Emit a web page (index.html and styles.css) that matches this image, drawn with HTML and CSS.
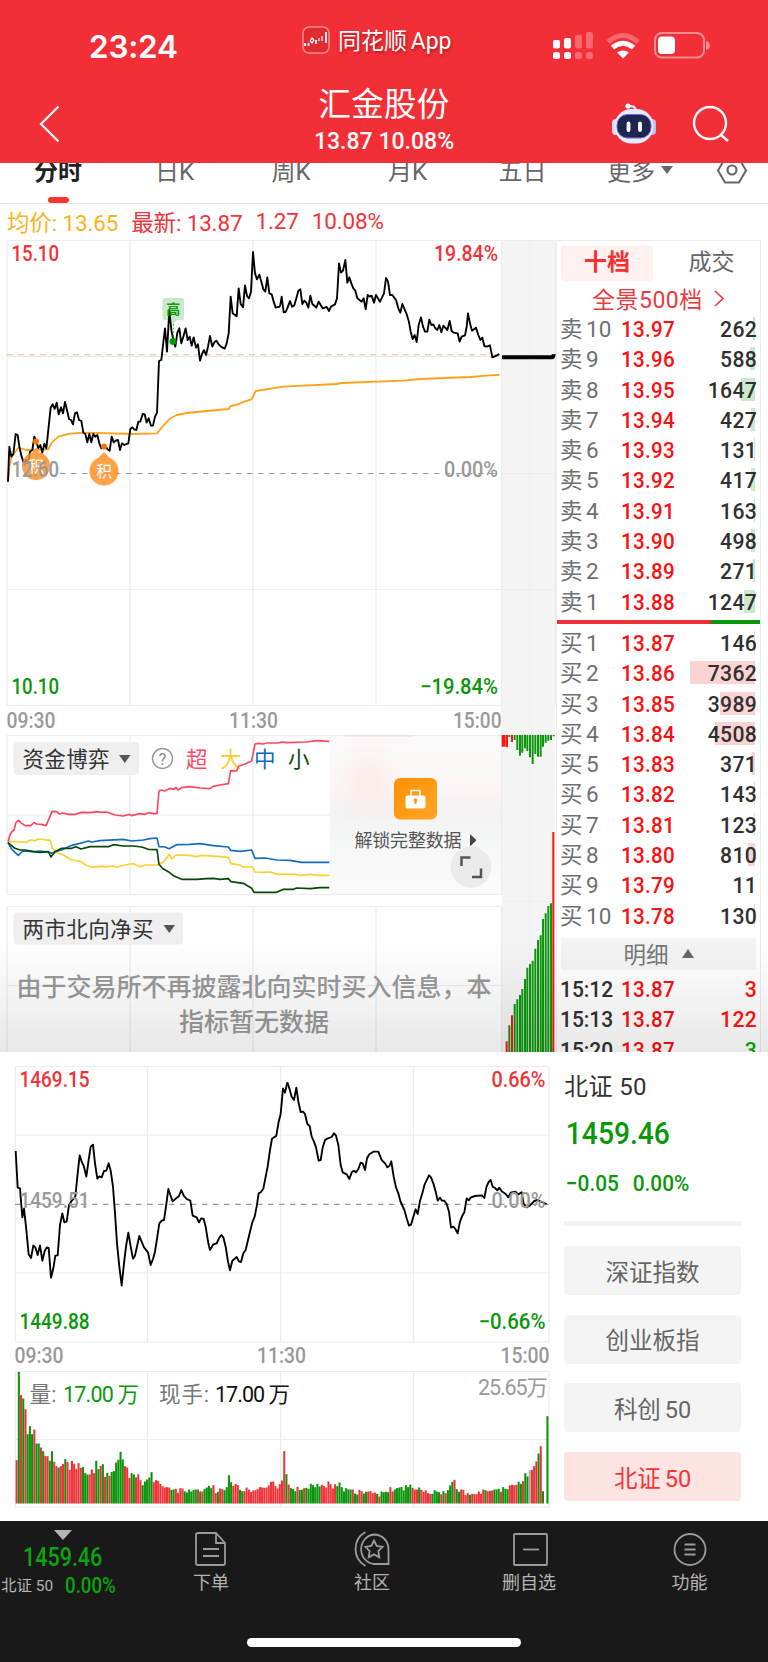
FILE: index.html
```html
<!DOCTYPE html>
<html lang="zh-CN">
<head>
<meta charset="utf-8">
<title>汇金股份</title>
<link rel="stylesheet" href="styles.css">
</head>
<body>
<div class="phone">
  <header class="header">
    <div class="status">
      <span class="clock">23:24</span>
      <span class="app">
        <svg width="28" height="28" viewBox="0 0 28 28"><rect x="1" y="1" width="26" height="26" rx="6" fill="#e32a2f" stroke="#ff8d90" stroke-width="1.5"/><path d="M3 17v3M6.500 17v3M14 14v4M24 6v11" stroke="#fff" stroke-width="1.800" fill="none"/><path d="M10 12l-1.800 3 1.800 2 1.800-3zM17 12v3M20 10v5" stroke="#fff" stroke-width="1.300" fill="none"/></svg>
        <span>同花顺 App</span>
      </span>
      <svg class="signals" width="160" height="30" viewBox="552 31 160 30">
        <g fill="#fff"><rect x="553" y="40" width="7" height="8.500" rx="2"/><rect x="564" y="38" width="7" height="10.500" rx="2"/><rect x="553" y="52" width="7" height="7" rx="2.500"/><rect x="564" y="52" width="7" height="7" rx="2.500"/>
        <g opacity=".28"><rect x="575" y="35" width="7" height="13.500" rx="2"/><rect x="586" y="32" width="7" height="16.500" rx="2"/><rect x="575" y="52" width="7" height="7" rx="2.500"/><rect x="586" y="52" width="7" height="7" rx="2.500"/></g></g>
        <g fill="none" stroke="#fff" stroke-width="5"><path d="M608 42q15-13 30 0" opacity=".28"/><path d="M612.500 47.500q10.500-8.500 21 0"/></g>
        <path d="M617 52.500q6-4 12 0l-6 6z" fill="#fff"/>
        <rect x="655" y="33" width="49" height="24.500" rx="7" fill="none" stroke="#fff" stroke-opacity=".45" stroke-width="2"/><rect x="658" y="36.500" width="17" height="17.500" rx="4" fill="#fff"/><path d="M706 41q4 1 4 4.500t-4 4.500z" fill="#fff" opacity=".45"/>
      </svg>
    </div>
    <div class="titlebar">
      <svg width="22" height="38" viewBox="0 0 22 38"><path d="M20.500 1.500L3 19l17.500 17.500" fill="none" stroke="#fff" stroke-width="2.200"/></svg>
      <div class="titles"><h1>汇金股份</h1><p>13.87 10.08%</p></div>
      <svg class="bot" width="46" height="42" viewBox="0 0 46 42">
        <path d="M25 10c0-6-4-6-7-6" fill="none" stroke="#dce7ff" stroke-width="2.200"/><circle cx="17" cy="4" r="2.600" fill="#fff"/>
        <rect x="1" y="17" width="8" height="16" rx="4" fill="#d5dcf6"/><rect x="37" y="17" width="8" height="16" rx="4" fill="#b9c3f0"/>
        <rect x="3.500" y="7" width="39" height="34.500" rx="17" fill="#e6ebff"/><rect x="6" y="12.500" width="34" height="23.500" rx="10.500" fill="#1c2550" stroke="#7c64e0" stroke-width="1"/>
        <path d="M17.500 21.500v6.500M29 21.500v6.500" stroke="#fff" stroke-width="3.800" stroke-linecap="round"/>
      </svg>
      <svg width="38" height="38" viewBox="0 0 38 38"><circle cx="18" cy="18" r="16" fill="none" stroke="#fff" stroke-width="2.400"/><path d="M29 30l7 6" stroke="#fff" stroke-width="2.400"/></svg>
    </div>
  </header>

  <nav class="tabs">
    <span class="tab on">分时</span><span class="tab">日K</span><span class="tab">周K</span><span class="tab">月K</span><span class="tab">五日</span><span class="tab">更多<i></i></span>
    <svg width="32" height="28" viewBox="0 0 32 28"><path d="M9 2.500h14l7 12-7 12H9l-7-12z" fill="none" stroke="#666" stroke-width="2"/><circle cx="16" cy="14" r="4.500" fill="none" stroke="#666" stroke-width="2.200"/></svg>
  </nav>

  <div class="quote"><span class="avg">均价: 13.65</span><span>最新: 13.87</span><span>1.27</span><span>10.08%</span></div>

  <main class="stock">
    <svg class="charts" width="556" height="812" viewBox="0 240 556 812">
      <defs>
        <linearGradient id="lock" x2="1" y2="1"><stop stop-color="#ff9100"/><stop offset="1" stop-color="#ffa526"/></linearGradient>
        <linearGradient id="veil" x2="0" y2="1"><stop stop-color="#fbfafa"/><stop offset=".35" stop-color="#fbf5f5"/><stop offset=".48" stop-color="#f4f2f2"/><stop offset=".6" stop-color="#f4f6f5"/><stop offset="1" stop-color="#fbfbfb"/></linearGradient>
        <radialGradient id="blush"><stop stop-color="#fbe6e4" stop-opacity=".6"/><stop offset="1" stop-color="#fbe6e4" stop-opacity="0"/></radialGradient>
      </defs>
      <rect x="501" y="240" width="54" height="812" fill="#f4f4f4"/>
      <g class="grid">
        <path d="M7 240.500H555M7 705.500H501M7 240.500V705.500M130 240.500V705.500M253 240.500V705.500M376 240.500V705.500M501.500 240.500V705.500M7 356.500H501M7 589.500H555M501 473.500H555M555.500 240.500V705.500"/>
        <path d="M7 735.500H501M7 894.500H501M7 735.500V894.500M130 735.500V894.500M253 735.500V894.500M7 815H501M501.500 735.500V894.500"/>
        <path d="M529.500 240V1052M502 901.500H555" stroke-dasharray="2 2"/>
      </g>
      <rect x="0" y="895" width="502" height="12" fill="#fff"/>
      <path class="grid" d="M7 906.500H501M7 906.500V1052M130 906.500V1052M253 906.500V1052M376 906.500V1052M501.500 906.500V1052M7 985.500H501"/>
      <path d="M7 354.800H501" stroke="#dfbd92" stroke-dasharray="6 5" fill="none"/>
      <path d="M60 473.500H498" class="dash"/>
      <g transform="translate(0 230) scale(.33333)" class="line">
        <path class="mean" d="M24 755L28 710L35 680L55 653L80 660L145 658L155 638L175 620L210 611L250 608L400 612L471 610L490 587L510 566L530 555L560 549L620 543L686 537L692 528L712 524L735 514L755 508L767 483L850 470L1010 462L1025 459L1210 452L1260 447L1410 441L1470 436L1498 435"/>
        <path class="price" d="M24 755L28 650 34 680 40 672 47 612 53 615 58 650 65 680 72 700 78 690 84 700 90 665 97 660 103 620 109 635 115 655 121 645 127 668 133 642 139 655 146 590 152 533 158 523 164 537 170 518 176 553 183 532 189 550 195 516 201 540 207 567 213 570 219 583 225 550 231 547 237 570 244 573 250 608 256 612 262 637 268 612 274 637 280 612 286 620 292 615 298 640 304 655 310 650 317 650 323 658 329 662 335 620 341 637 347 632 354 630 360 660 366 640 373 645 379 642 385 640 391 597 397 592 403 598 409 600 415 575 421 575 428 552 434 553 440 578 446 565 453 587 459 587 465 560 471 548 477 393 484 390 489 345 495 295 501 365 508 240 514 300 520 330 526 350 532 308 538 295 544 340 550 320 557 295 563 330 569 320 575 347 581 322 588 353 594 343 600 392 606 372 612 360 618 375 624 350 630 318 637 350 643 337 649 332 656 343 663 350 674 356 680 340 686 310 692 200 698 250 710 259 716 175 722 222 729 232 735 166 741 198 747 205 753 185 759 66 765 130 771 148 778 134 784 155 790 178 796 185 802 142 808 190 815 193 821 215 827 233 840 230"/>
      </g>
      <g transform="translate(270 230) scale(.33333)" class="line">
        <path class="price" d="M30 230L35 200 41 247 47 246 53 232 60 213 66 230 73 226 79 205 85 182 91 178 97 222 103 212 109 218 115 233 121 197 127 222 134 228 139 233 146 215 152 225 158 235 170 231 177 243 183 230 195 223 201 205 207 100 213 128 219 122 226 90 232 158 238 142 244 160 250 175 256 182 262 205 275 215 281 205 287 238 293 195 299 200 305 197 312 218 318 195 330 215 342 190 348 144 354 155 360 195 367 195 378 210 385 235 391 248 397 222 409 250 416 272 422 305 428 327 434 315 440 336 446 285 453 262 459 290 465 305 472 305 478 269 484 285 490 283 496 295 502 300 508 285 514 307 520 287 532 300 539 273 545 303 551 308 563 310 569 335 575 320 585 316 590 290 594 250 600 280 606 302 618 293 625 315 631 330 637 323 643 348 650 350 660 346 667 382 680 377 688 372"/>
        <path d="M696 382H844Q851 382 851 373" stroke="#000" stroke-width="12" fill="none"/>
      </g>
      <rect x="162.500" y="298" width="21.500" height="22" rx="2" fill="#008c00" fill-opacity=".2"/><path d="M169 320h8l-4 5z" fill="#008c00" fill-opacity=".2"/>
      <path d="M173.300 324V338" stroke="#3cb13c" stroke-dasharray="2 1.500"/><circle cx="173" cy="341.500" r="3.500" fill="#009c00"/>
      <text x="173.300" y="313.500" class="tag" fill="#0c9c0c">高</text>
      <g fill="#ff8c1f" fill-opacity=".82"><circle cx="36" cy="466" r="14"/><path d="M32 452l4-4 4 4z"/><circle cx="104" cy="471" r="14.500"/><path d="M99 457l5-5 5 5z"/></g>
      <g fill="#ff7300"><circle cx="36" cy="441.500" r="3"/><circle cx="104" cy="446.500" r="3"/></g>
      <text x="36" y="471.500" class="badge">积</text><text x="104" y="476.500" class="badge">积</text>
      <g class="num">
        <text x="11.500" y="261.300" textLength="47.500" lengthAdjust="spacingAndGlyphs" class="up">15.10</text><text x="434" y="261.300" textLength="64" lengthAdjust="spacingAndGlyphs" class="up">19.84%</text>
        <text x="11.500" y="477" textLength="47.500" lengthAdjust="spacingAndGlyphs" class="mid">12.60</text><text x="444" y="477" textLength="54" lengthAdjust="spacingAndGlyphs" class="mid">0.00%</text>
        <text x="11.500" y="693.500" textLength="47.500" lengthAdjust="spacingAndGlyphs" class="down">10.10</text><text x="420" y="693.500" textLength="78" lengthAdjust="spacingAndGlyphs" class="down">−19.84%</text>
        <g class="mid"><text x="6.500" y="727.500" textLength="49" lengthAdjust="spacingAndGlyphs">09:30</text><text x="229" y="727.500" textLength="49" lengthAdjust="spacingAndGlyphs">11:30</text><text x="453" y="727.500" textLength="48.500" lengthAdjust="spacingAndGlyphs">15:00</text></g>
      </g>

      <rect x="13.500" y="742" width="125.500" height="33" rx="4" fill="#efefef"/>
      <text x="22.500" y="767" textLength="87" class="cn" fill="#333">资金博弈</text><path d="M119 755h11.500l-5.700 8z" fill="#555"/>
      <circle cx="162.500" cy="758.500" r="10" fill="none" stroke="#999" stroke-width="1.500"/><text x="162.500" y="764.500" class="help">?</text>
      <g class="cn"><text x="186" y="766.500" fill="#ff4a63">超</text><text x="220" y="766.500" fill="#fc3">大</text><text x="254" y="766.500" fill="#0e69be">中</text><text x="288" y="766.500" fill="#0b4d0b">小</text></g>
      <g transform="translate(0 660) scale(.33333)" class="flow">
        <path stroke="#fdcf2f" d="M24 545L50 545 80 547 90 540 105 542 115 537 150 541 158 565 175 580 190 585 215 600 243 604 255 614 275 622 300 619 325 620 340 618 350 621 390 612 400 611 420 620 435 615 471 615 490 607 508 583 516 597 528 585 570 586 590 590 605 586 650 589 685 592 693 611 720 615 730 621 757 621 765 636 790 637 810 636 835 643 880 642 900 646 930 643 950 646 988 646"/>
        <path stroke="#136dbe" d="M24 548L35 567 45 577 55 586 68 573 100 575 120 573 145 576 155 580 165 575 185 570 215 556 240 550 265 543 275 546 300 542 370 538 395 543 430 540 450 536 471 534 477 560 495 561 507 566 530 554 570 553 600 551 640 557 685 561 692 571 720 574 755 570 765 595 795 594 830 600 870 601 905 607 988 607"/>
        <path stroke="#064806" d="M24 548L45 565 60 570 75 570 100 575 120 577 145 575 153 591 165 575 185 565 215 565 228 560 243 567 270 560 325 560 340 554 370 558 400 558 425 561 445 568 471 569 477 613 487 625 505 635 520 647 545 658 590 658 620 656 640 655 660 658 685 656 693 665 730 670 755 685 762 697 830 697 850 688 880 688 890 684 930 686 960 683 988 683"/>
        <path stroke="#fb4761" d="M24 545L30 525 36 515 42 510 48 487 56 481 62 488 75 497 92 497 102 488 110 492 125 493 138 497 150 470 156 454 170 455 178 462 188 459 205 463 225 463 245 457 270 458 290 455 305 457 320 456 345 465 370 468 387 463 395 467 420 461 435 463 445 458 460 461 471 461 477 393 485 390 495 393 510 385 522 388 528 382 534 390 545 383 570 380 600 384 630 386 640 379 660 375 685 371 692 332 710 333 716 318 735 312 755 303 765 252 775 250 790 252 800 249 835 249 845 246 860 248 920 246 950 242 988 244"/>
      </g>
      <rect x="330" y="736" width="171" height="158" fill="url(#veil)"/><ellipse cx="368" cy="782" rx="36" ry="45" fill="url(#blush)"/>
      <path d="M345 736h67" stroke="#f9d3d3"/>
      <rect x="394" y="778" width="43" height="41.500" rx="6" fill="url(#lock)"/>
      <rect x="405.500" y="795.500" width="20" height="13" rx="2" fill="#fff"/><path d="M411 796v-5.500h9v5.500" fill="none" stroke="#fff" stroke-width="1.600"/><path d="M415.500 799v5" stroke="#ff960a" stroke-width="2"/><circle cx="415.500" cy="800" r="1.800" fill="#ff960a"/>
      <text x="354.500" y="846.500" textLength="107" class="unlock">解锁完整数据</text><path d="M470.500 835v10.500l5.500-5.200z" fill="#444" stroke="#444"/>
      <circle cx="471" cy="867" r="20.500" fill="#ebebeb"/><path d="M461.500 866v-8.500h9M481 868.500v8.500h-9" fill="none" stroke="#555" stroke-width="2.500"/>
      <rect x="13.500" y="912.500" width="169.500" height="32" rx="4" fill="#efefef"/><text x="22.500" y="937" textLength="131" class="cn" fill="#333">两市北向净买</text><path d="M163.500 925h11.500l-5.700 8z" fill="#555"/>
      <g class="notice"><text x="254" y="995.500">由于交易所不再披露北向实时买入信息，本</text><text x="254" y="1031">指标暂无数据</text></g>
      <g transform="translate(320 720) scale(.33333)" fill="none" stroke-width="6">
        <path stroke="#0c970c" d="M568 45V52M584 45V60M592 45V90M600 45V107M607 45V98M615 45V85M622 45V93M630 45V112M638 45V132M646 45V102M654 45V110M662 45V110M669 45V80M677 45V68M685 45V62M693 45V60M568 996V916M584 996V852M592 996V838M600 996V825M607 996V807M615 996V777M622 996V743M630 996V732M638 996V722M646 996V686M654 996V660M662 996V646M669 996V597M677 996V580M685 996V558M693 996V550"/>
        <path stroke="#fb1515" d="M548 45V80M554 45V80M561 45V82M576 45V66M701 45V49M560 996V964M576 996V886M700 996V336"/>
      </g>
    </svg>

    <section class="book">
      <div class="switch"><b>十档</b><span>成交</span></div>
      <a class="depth">全景500档 <svg width="10" height="17" viewBox="0 0 10 17"><path d="M1 1l8 7.500L1 16" fill="none" stroke="#e93b3e" stroke-width="1.600"/></svg></a>
      <ul class="rows sell">
        <li><span>卖 10</span><b>13.97</b><em>262</em><i style="width:2px"></i></li>
        <li><span>卖 9</span><b>13.96</b><em>588</em><i style="width:5px"></i></li>
        <li><span>卖 8</span><b>13.95</b><em>1647</em><i style="width:14px"></i></li>
        <li><span>卖 7</span><b>13.94</b><em>427</em><i style="width:4px"></i></li>
        <li><span>卖 6</span><b>13.93</b><em>131</em><i style="width:1px"></i></li>
        <li><span>卖 5</span><b>13.92</b><em>417</em><i style="width:4px"></i></li>
        <li><span>卖 4</span><b>13.91</b><em>163</em><i style="width:1px"></i></li>
        <li><span>卖 3</span><b>13.90</b><em>498</em><i style="width:4px"></i></li>
        <li><span>卖 2</span><b>13.89</b><em>271</em><i style="width:2px"></i></li>
        <li><span>卖 1</span><b>13.88</b><em>1247</em><i style="width:11px"></i></li>
      </ul>
      <div class="ratio"></div>
      <ul class="rows buy">
        <li><span>买 1</span><b>13.87</b><em>146</em><i style="width:1px"></i></li>
        <li><span>买 2</span><b>13.86</b><em>7362</em><i style="width:65px"></i></li>
        <li><span>买 3</span><b>13.85</b><em>3989</em><i style="width:35px"></i></li>
        <li><span>买 4</span><b>13.84</b><em>4508</em><i style="width:40px"></i></li>
        <li><span>买 5</span><b>13.83</b><em>371</em><i style="width:3px"></i></li>
        <li><span>买 6</span><b>13.82</b><em>143</em><i style="width:1px"></i></li>
        <li><span>买 7</span><b>13.81</b><em>123</em><i style="width:1px"></i></li>
        <li><span>买 8</span><b>13.80</b><em>810</em><i style="width:7px"></i></li>
        <li><span>买 9</span><b>13.79</b><em>11</em></li>
        <li><span>买 10</span><b>13.78</b><em>130</em><i style="width:1px"></i></li>
      </ul>
      <div class="detail">明细<i></i></div>
      <ul class="rows ticks">
        <li><span>15:12</span><b>13.87</b><em>3</em></li>
        <li><span>15:13</span><b>13.87</b><em>122</em></li>
        <li><span>15:20</span><b>13.87</b><em class="out">3</em></li>
      </ul>
    </section>
    <div class="fade"></div>
  </main>

  <section class="index">
    <svg width="556" height="469" viewBox="0 1052 556 469">
      <g class="grid">
        <path d="M15.500 1066.500H549V1342H15.500zM147.500 1066V1342M280.500 1066V1342M413.500 1066V1342M15 1135H549M15 1273H549"/>
        <path d="M15.500 1371.500H549V1507H15.500zM147.500 1371V1507M280.500 1371V1507M413.500 1371V1507M15 1439.500H549"/>
      </g>
      <path d="M15 1204.300H549" class="dash"/>
      <path class="line price" transform="translate(0 1050) scale(.33333)" d="M47 303L53 413 60 415 67 502 72 476 78 530 86 613 93 624 100 586 106 592 113 615 120 586 127 632 134 603 140 592 146 594 153 683 160 655 166 617 173 616 180 525 187 490 193 517 200 515 207 465 213 455 226 440 232 380 239 316 245 335 252 350 259 380 266 330 272 290 279 284 285 340 292 386 298 379 305 382 312 363 319 362 326 340 332 362 339 410 345 490 351 580 358 650 365 707 372 640 378 590 385 548 392 590 399 626 405 617 418 558 432 592 444 607 452 645 459 627 465 605 472 560 478 520 485 512 492 510 498 470 505 417 511 435 518 454 525 448 537 438 544 420 551 437 560 447 571 452 578 497 590 502 597 517 604 505 611 507 617 530 625 580 630 600 640 583 650 580 657 565 664 555 670 562 677 590 684 635 690 661 697 632 710 621 717 634 723 636 730 610 737 600 750 545 757 517 764 500 770 470 776 430 783 426 790 416 803 350 810 300 816 266 829 257 836 215 842 192 849 115 855 128 862 97"/>
      <path class="line price" transform="translate(280 1050) scale(.33333)" d="M22 97L28 115 35 140 42 150 49 113 55 155 62 186 69 185 75 192 82 222 89 228 95 260 102 275 108 292 116 332 122 330 128 293 135 270 142 266 155 261 162 250 168 257 175 285 182 345 188 367 200 373 208 387 215 367 222 362 228 367 235 357 242 338 248 340 255 360 261 325 268 313 280 305 295 305 305 330 315 340 322 352 328 348 334 334 341 380 348 412 355 430 361 453 373 480 380 505 387 527 393 524 400 500 407 478 413 492 420 453 427 430 434 403 447 376 453 382 460 400 467 425 473 452 480 443 486 452 493 452 500 462 507 485 513 533 520 530 526 537 533 550 540 515 547 497 553 487 560 445 566 451 573 442 585 438 606 436 613 444 619 412 626 396 632 390 638 410 645 414 652 421 658 413 665 424 677 432 685 442 692 428 706 425 715 433 725 427 731 462 740 472 750 466 763 453 772 450 785 456 800 462"/>
      <g class="num">
        <text x="19.500" y="1086.500" textLength="70" lengthAdjust="spacingAndGlyphs" class="up">1469.15</text><text x="491.500" y="1086.500" textLength="54" lengthAdjust="spacingAndGlyphs" class="up">0.66%</text>
        <text x="19.500" y="1207.800" textLength="70" lengthAdjust="spacingAndGlyphs" class="mid">1459.51</text><text x="491.500" y="1207.800" textLength="54" lengthAdjust="spacingAndGlyphs" class="mid">0.00%</text>
        <text x="19.500" y="1329" textLength="70" lengthAdjust="spacingAndGlyphs" class="down">1449.88</text><text x="478.500" y="1329" textLength="67" lengthAdjust="spacingAndGlyphs" class="down">−0.66%</text>
        <g class="mid"><text x="14.500" y="1363" textLength="49" lengthAdjust="spacingAndGlyphs">09:30</text><text x="257" y="1363" textLength="49" lengthAdjust="spacingAndGlyphs">11:30</text><text x="500.500" y="1363" textLength="49" lengthAdjust="spacingAndGlyphs">15:00</text></g>
      </g>
      <g id="volume" transform="translate(15.600 1503.500)"></g>
      <g class="vol">
        <text x="29.500" y="1401.500" textLength="27" fill="#777">量:</text><text x="63" y="1401.500" textLength="76" fill="#0c960c">17.00 万</text>
        <text x="159" y="1401.500" textLength="50" fill="#777">现手:</text><text x="215" y="1401.500" textLength="75" fill="#111">17.00 万</text>
        <text x="478" y="1395" textLength="70" fill="#999">25.65万</text>
      </g>
    </svg>
    <aside class="side">
      <h2>北证 50</h2>
      <strong>1459.46</strong>
      <p><span>−0.05</span><span>0.00%</span></p>
      <hr>
      <button>深证指数</button><button>创业板指</button><button>科创 50</button><button class="on">北证 50</button>
    </aside>
  </section>

  <footer class="dock">
    <div class="ticker"><i></i><b>1459.46</b><p><span>北证 50</span><em>0.00%</em></p></div>
    <div class="item"><svg width="32" height="36" viewBox="0 0 32 36"><path d="M3 2h18l9 10v20q0 2-2 2H3q-2 0-2-2V4q0-2 2-2zM21 2v10h9M8 18h16M8 25h16"/></svg>下单</div>
    <div class="item"><svg width="38" height="36" viewBox="0 0 38 36"><path d="M21 3.500a14.500 14.500 0 0 1 14.500 14.500v15H21a14 14.800 0 0 1 0-29.500zM12.500 1a19.500 19.500 0 0 0 0 34M21 9.500l2.700 5.500 5.800.9-4.200 4.200 1 6.200-5.300-2.900-5.300 2.900 1-6.200-4.200-4.200 5.800-.9z"/></svg>社区</div>
    <div class="item remove"><svg width="36" height="36" viewBox="0 0 36 36"><rect x="1" y="3" width="33" height="31" rx="1"/><path d="M10 18.500h16"/></svg>删自选</div>
    <div class="item last"><svg width="34" height="36" viewBox="0 0 34 36"><circle cx="17" cy="18.500" r="15.500"/><path d="M11.500 13.500h11M11.500 18.500h11M11.500 23.500h11"/></svg>功能</div>
    <div class="home"></div>
  </footer>
</div>
<script src="volume.js"></script>
</body>
</html>
```
FILE: styles.css
```css
* { box-sizing: border-box; margin: 0; padding: 0; }
body { width: 768px; background: #fff; font-family: Roboto, "Noto Sans CJK SC", sans-serif; color: #333; }
svg { display: block; flex: none; }
i, em { font-style: normal; }
ul { list-style: none; }
.phone { width: 768px; height: 1662px; overflow: hidden; display: flex; flex-direction: column; }

.header { height: 163px; flex: none; background: #f22f37; color: #fff; }
.status { height: 84px; padding: 4px 56px 0 89px; display: flex; align-items: center; }
.clock { width: 213px; padding-top: 5px; font: 600 31.500px Inter, sans-serif; letter-spacing: -.2px; }
.app { width: 250px; height: 36px; margin-top: -8px; display: flex; align-items: center; gap: 8px; font-size: 23px; word-spacing: -2px; text-shadow: 1px 2px 3px #8008; white-space: nowrap; }
.app span { margin-top: -2px; }
.signals { margin-top: 4px; }
.titlebar { height: 79px; padding: 0 38px; display: flex; align-items: center; }
.titles { width: 300px; margin: -2px 0 0 175px; text-align: center; }
.titles h1 { font-size: 32.500px; line-height: 36px; font-weight: 400; letter-spacing: .2px; }
.titles p { font-size: 24.500px; line-height: 35px; font-weight: 500; transform: scaleX(.94); }
.bot { margin: -2px 35px 0 78px; }

.tabs { height: 41px; flex: none; border-bottom: 1px solid #e6e6e6; display: grid; grid-template-columns: 116px 117px 116px 117px 113px 122px 50px; overflow: hidden; background: #fff; }
.tab { position: relative; height: 40px; font-size: 24px; line-height: 18px; text-align: center; color: #666; }
.tab.on { font-weight: 700; color: #222; }
.tab.on::after { content: ""; position: absolute; left: 48px; bottom: 0; width: 21px; height: 6px; border-radius: 3px; background: #fb3333; }
.tab i { display: inline-block; margin-left: 6px; border: 6px solid transparent; border-top: 8px solid #666; border-bottom: 0; vertical-align: 6px; }
.tabs svg { margin: -7px 0 0 15px; }

.quote { height: 36px; flex: none; padding: 0 0 2px 7px; display: flex; align-items: center; gap: 13px; font-size: 22.500px; letter-spacing: -.15px; color: #ee3438; white-space: nowrap; }
.quote .avg { color: #fbb31c; }

.stock { position: relative; height: 812px; flex: none; display: flex; overflow: hidden; }
.fade { position: absolute; inset: 700px 0 0; background: linear-gradient(#0000, #00000017); pointer-events: none; }
.grid { fill: none; stroke: #ececec; stroke-width: 1.200; }
.dash { fill: none; stroke: #999; stroke-width: 1.200; stroke-dasharray: 5.500 5.500; }
.line { fill: none; stroke-linejoin: round; }
.price { stroke: #000; stroke-width: 5.600; }
.mean { stroke: #ffa21a; stroke-width: 5.400; }
.flow { fill: none; stroke-width: 5; stroke-linejoin: round; }
.num { font-size: 21.500px; font-weight: 500; }
.up { fill: #ef3338; }
.down { fill: #099809; }
.mid { fill: #999; }
.tag { font-size: 14px; font-weight: 700; text-anchor: middle; }
.badge { font-size: 16px; fill: #fff; text-anchor: middle; }
.help { font-size: 16px; fill: #888; text-anchor: middle; }
.cn { font-size: 21.500px; }
.unlock { font-size: 18px; fill: #555; }
.notice { font-size: 25px; font-weight: 500; fill: #999; text-anchor: middle; }
.vol { font-size: 21.500px; }

.book { width: 205px; height: 812px; border: 1px solid #ececec; border-width: 1px 1px 0 1px; overflow: hidden; }
.switch { height: 40px; padding: 4px 4px 0; display: grid; grid-template-columns: 92px 1fr; font-size: 23px; line-height: 35px; text-align: center; color: #666; }
.switch b { color: #fb2f2f; background: #fff2f0; border-radius: 4px; }
.switch span { padding-left: 14px; }
.depth { height: 33px; padding: 1px 0 0 35px; display: flex; align-items: center; gap: 11px; font-size: 23px; letter-spacing: .5px; color: #e93b3e; white-space: nowrap; }
.rows { font-size: 22.500px; }
.rows li { position: relative; height: 30.300px; line-height: 30.300px; padding: 0 3px 0 3px; display: grid; grid-template-columns: 61px 70px 1fr; white-space: nowrap; }
.rows span { color: #707070; word-spacing: -2px; }
.rows b { font-weight: 500; color: #fa1010; letter-spacing: .3px; transform: scaleX(.915); transform-origin: 0 0; }
.rows em { font-weight: 500; text-align: right; letter-spacing: .3px; transform: scaleX(.94); transform-origin: 100% 0; color: #303030; position: relative; z-index: 1; }
.rows i { position: absolute; right: 5px; top: 3px; height: 23px; }
.sell i { background: #cbe9cb; }
.buy i { background: #fbd3d3; }
.ratio { height: 4px; margin: 3px -1px 4px; background: linear-gradient(90deg, #ec3036 155px, #0b960b 155px); }
.detail { height: 32px; margin: 7px 4px 4px; display: flex; align-items: center; justify-content: center; gap: 13px; padding-bottom: 1px; background: #f4f4f4; font-size: 22.500px; color: #777; }
.detail i { border: 6px solid transparent; border-bottom: 9px solid #666; border-top: 0; }
.rows.ticks span { color: #303030; font-weight: 500; transform: scaleX(.93); transform-origin: 0 0; }
.ticks em { color: #fa1010; }
.ticks .out { color: #099809; }

.index { height: 469px; flex: none; display: flex; }
.side { padding: 20px 0 0 8px; width: 185px; display: flex; flex-direction: column; }
.side h2 { height: 30px; font-size: 24px; line-height: 30px; font-weight: 400; padding-left: 0; letter-spacing: .4px; }
.side strong { margin-top: 14px; height: 36px; font-size: 31px; line-height: 36px; font-weight: 500; color: #099809; padding-left: 2px; transform: scaleX(.91); transform-origin: 0 0; }
.side p { margin-top: 17px; height: 28px; display: flex; gap: 15px; font-size: 22.500px; line-height: 28px; font-weight: 500; color: #099809; padding-left: 2px; transform: scaleX(.925); transform-origin: 0 0; }
.side hr { border: 0; height: 5px; margin: 24px 0 20px; background: #f2f2f2; }
.side button { border: 0; height: 49px; margin-bottom: 19.700px; border-radius: 4px; background: #f4f4f4; font: 23.500px Roboto, "Noto Sans CJK SC", sans-serif; word-spacing: -2px; color: #666; }
.side .on { background: #ffe4e4; color: #f83434; margin: 0; }

.dock { height: 141px; flex: none; background: #191919; color: #b5b5b5; display: grid; grid-template: 117px 24px / 132px 158px 164px 148px 166px; }
.item { padding-top: 10px; display: flex; flex-direction: column; align-items: center; gap: 2px; font-size: 18px; line-height: 27px; }
.item svg { fill: none; stroke: #9b9b9b; stroke-width: 1.800; }
.item.remove { padding-left: 2px; }
.item.remove svg { margin-left: 4px; }
.last { padding-left: 9px; }
.ticker { padding-top: 9px; }
.ticker i { display: block; width: 18px; margin-left: 54px; border: 9px solid transparent; border-top: 10px solid #b5b5b5; border-bottom: 0; }
.ticker b { display: block; width: 100px; margin: 4px 0 0 23px; font-size: 25px; line-height: 27px; font-weight: 500; transform: scaleX(.86); transform-origin: 0 0; color: #0ca50c; }
.ticker p { display: flex; gap: 12px; padding-left: 1px; font-size: 15.500px; line-height: 30px; white-space: nowrap; }
.ticker em { font-size: 21.500px; font-weight: 500; transform: scaleX(.87); transform-origin: 0 0; color: #0ca50c; }
.home { grid-column: 1 / -1; width: 274px; height: 9px; margin-left: 247px; border-radius: 5px; background: #fff; }
```
FILE: volume.js
```js
const bars = `r130 g395 r325 g315 r283 g208 g232 g208 r222 g180 g180 r168 g157 r143 r142 g128 g157 r125 r112 g108 r112 r119 g133 r125 r101 r128 r119 r104 r121 r107 g109 g91 g87 r87 r102 r91 g128 g103 r113 g118 r80 g92 r83 g95 g97 g123 g131 g155 g132 r112 r108 r77 g91 g87 r78 r88 r70 g55 g66 g72 g78 g94 r64 r70 r68 r59 r52 r48 r49 r48 g41 g42 r44 r32 r46 r45 g37 g33 g42 g36 g41 g42 r42 g36 r36 g44 g48 g53 g46 r55 r31 g35 r45 r43 g40 g49 g85 g64 r53 r59 r55 g41 g37 r37 r48 r42 r34 r39 r40 r43 r49 r48 r47 r48 r54 r65 r66 r53 r45 r58 r69 r157 g88 r57 g46 g43 g37 r50 g41 g41 r46 g47 g44 g59 g55 g49 g59 g51 r56 r52 r48 r66 r58 r45 r58 g52 g63 g49 g36 g46 g42 g42 r42 g30 g27 r41 r37 g30 g35 r36 r37 r31 r33 g29 r21 g36 g34 g35 g34 r49 r36 g42 g46 g48 g50 g39 g55 g49 g57 r47 r42 r42 g48 r41 r35 r40 r31 r29 g29 g40 g36 g34 r28 g37 r31 g40 g54 g65 r71 g43 g35 r42 r41 r25 r31 g26 r29 r28 r28 r36 r29 r42 g40 r37 r38 r39 g42 g42 g44 r35 g49 g44 g43 r54 r56 r55 r56 g65 g59 r67 g91 g81 n100 r101 r112 r126 g150 r172 g37 n0 g262`.split(" ");
const colors = { r: "#ec3338", g: "#0b930b", n: "#aaa" };
const step = 533 / bars.length;
const group = document.getElementById("volume");
bars.forEach((bar, i) => {
  const height = Number(bar.slice(1)) / 3;
  const rect = document.createElementNS("http://www.w3.org/2000/svg", "rect");
  rect.setAttribute("x", (i * step).toFixed(2));
  rect.setAttribute("y", (-height).toFixed(2));
  rect.setAttribute("width", 2.05);
  rect.setAttribute("height", height.toFixed(2));
  rect.setAttribute("fill", colors[bar[0]]);
  group.append(rect);
});
```
